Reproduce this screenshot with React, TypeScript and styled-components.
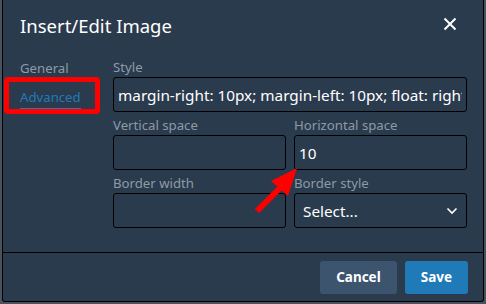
import React from 'react';
import styled, { createGlobalStyle } from 'styled-components';

// Estilos globales de la página
const GlobalStyle = createGlobalStyle`
  html, body {
    margin: 0;
    padding: 0;
    background-color: #4a525d;
    font-family: "Noto Sans", "Open Sans", sans-serif;
    overflow: hidden;
  }
`;

const Page = styled.div`
  position: relative;
  width: 486px;
  height: 304px;
`;

const Dialog = styled.div`
  margin-left: 2px;
  width: 482px;
  height: 302px;
  background-color: #2b3b4e;
  border: 1px solid #000;
  border-top: none;
  border-radius: 0 0 3px 3px;
  display: flex;
  flex-direction: column;
  color: #fff;
  box-sizing: border-box;
`;

const Header = styled.div`
  height: 52px;
  display: flex;
  align-items: center;
  justify-content: space-between;
  padding: 0 25px 0 17px;
  flex-shrink: 0;
`;

const Title = styled.div`
  font-size: 18.5px;
  color: #fff;
  margin-top: -2px;
`;

const CloseButton = styled.button`
  background: none;
  border: none;
  padding: 0;
  width: 16px;
  height: 16px;
  display: flex;
  align-items: center;
  justify-content: center;
  margin-top: -4px;
`;

const Body = styled.div`
  flex: 1;
  display: flex;
  padding: 6px 16px 0 17px;
`;

const Tabs = styled.div`
  width: 93px;
  display: flex;
  flex-direction: column;
  gap: 7px;
  padding-top: 1px;
`;

const Tab = styled.div<{ $active?: boolean }>`
  font-size: 13.2px;
  line-height: 18px;
  color: ${(p) => (p.$active ? '#207ab7' : '#8d9aa6')};
  align-self: flex-start;
  padding-bottom: 2px;
  border-bottom: 2px solid ${(p) => (p.$active ? '#207ab7' : 'transparent')};
`;

const Form = styled.div`
  flex: 1;
  display: flex;
  flex-direction: column;
  gap: 4px;
`;

const Row = styled.div`
  display: grid;
  grid-template-columns: 1fr 1fr;
  column-gap: 8px;
`;

const Field = styled.div`
  display: flex;
  flex-direction: column;
  min-width: 0;
`;

const Label = styled.label`
  font-size: 13.2px;
  line-height: 18px;
  height: 18px;
  color: #8d9aa6;
  margin-bottom: 1px;
`;

const Input = styled.input`
  box-sizing: border-box;
  height: 35px;
  width: 100%;
  background-color: #2b3b4e;
  border: 1px solid #000;
  border-radius: 3px;
  color: #fff;
  font-family: inherit;
  font-size: 15.3px;
  padding: 0 4px;
  outline: none;
`;

const SelectBox = styled.div`
  box-sizing: border-box;
  height: 35px;
  background-color: #2b3b4e;
  border: 1px solid #000;
  border-radius: 3px;
  display: flex;
  align-items: center;
  justify-content: space-between;
  padding: 0 8px 0 8px;
  font-size: 15.3px;
  color: #fff;
`;

const Footer = styled.div`
  height: 49px;
  border-top: 1px solid #000;
  display: flex;
  align-items: center;
  justify-content: flex-end;
  gap: 8px;
  padding: 0 15px 0 0;
  flex-shrink: 0;
  box-sizing: border-box;
`;

const Button = styled.button<{ $primary?: boolean }>`
  height: 33px;
  padding: 0 16px;
  border: none;
  border-radius: 3px;
  font-family: inherit;
  font-weight: 700;
  font-size: 13.5px;
  color: #fff;
  background-color: ${(p) => (p.$primary ? '#207ab7' : '#3d546f')};
`;

// Anotaciones rojas sobre la captura
const Highlight = styled.div`
  position: absolute;
  left: 4px;
  top: 77px;
  width: 96px;
  height: 37px;
  box-sizing: border-box;
  border: 5px solid #ff0000;
  border-radius: 4px;
  pointer-events: none;
`;

const ArrowLayer = styled.svg`
  position: absolute;
  left: 0;
  top: 0;
  pointer-events: none;
`;

const App: React.FC = () => {
  return (
    <Page>
      <GlobalStyle />
      <Dialog>
        <Header>
          <Title>Insert/Edit Image</Title>
          <CloseButton aria-label="Close">
            <svg width="14" height="14" viewBox="0 0 14 14">
              <path d="M1.5 1.5 L12.5 12.5 M12.5 1.5 L1.5 12.5" stroke="#fff" strokeWidth="2" />
            </svg>
          </CloseButton>
        </Header>
        <Body>
          <Tabs>
            <Tab>General</Tab>
            <Tab $active>Advanced</Tab>
          </Tabs>
          <Form>
            <Field>
              <Label>Style</Label>
              <Input readOnly value="margin-right: 10px; margin-left: 10px; float: right;" />
            </Field>
            <Row>
              <Field>
                <Label>Vertical space</Label>
                <Input readOnly value="" />
              </Field>
              <Field>
                <Label>Horizontal space</Label>
                <Input readOnly value="10" />
              </Field>
            </Row>
            <Row>
              <Field>
                <Label>Border width</Label>
                <Input readOnly value="" />
              </Field>
              <Field>
                <Label>Border style</Label>
                <SelectBox>
                  <span>Select...</span>
                  <svg width="12" height="8" viewBox="0 0 12 8">
                    <path d="M1.5 1.5 L6 6 L10.5 1.5" stroke="#fff" strokeWidth="1.6" fill="none" />
                  </svg>
                </SelectBox>
              </Field>
            </Row>
          </Form>
        </Body>
        <Footer>
          <Button>Cancel</Button>
          <Button $primary>Save</Button>
        </Footer>
      </Dialog>
      <Highlight />
      <ArrowLayer width="486" height="304">
        <line x1="257" y1="211" x2="282" y2="186" stroke="#ff0000" strokeWidth="6" />
        <polygon points="297,168 271,181 288,196" fill="#ff0000" />
      </ArrowLayer>
    </Page>
  );
};

export default App;
